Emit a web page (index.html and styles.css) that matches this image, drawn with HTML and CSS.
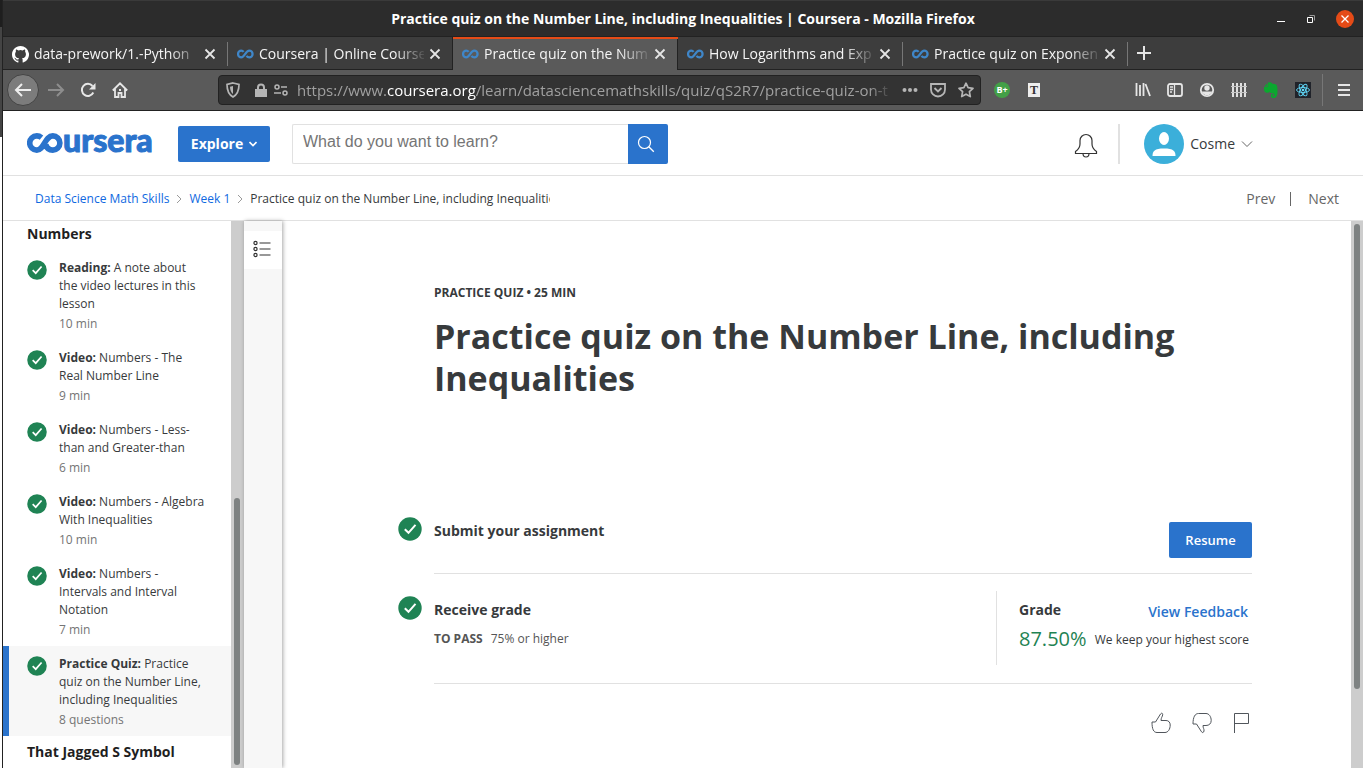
FILE: index.html
```html
<!DOCTYPE html>
<html lang="en">
<head>
<meta charset="utf-8">
<title>Practice quiz on the Number Line, including Inequalities | Coursera</title>
<link rel="stylesheet" href="styles.css">
</head>
<body>
<svg class="defs" width="0" height="0" aria-hidden="true">
  <symbol id="check" viewBox="0 0 24 24"><circle cx="12" cy="12" r="11.7" fill="#1f8354"/><path d="M6.800 12.200l3.700 3.600 7-8" fill="none" stroke="#fff" stroke-width="2"/></symbol>
  <symbol id="infinity" viewBox="0 0 18 10"><path d="M7 2.800C6.400 2 5.600 1.500 4.600 1.500a3.500 3.500 0 0 0 0 7C8.200 8.500 9 1.500 13 1.500a3.500 3.500 0 0 1 0 7c-1.400 0-2.300-.6-3-1.500" fill="none" stroke="#3f86c8" stroke-width="2.400"/></symbol>
  <symbol id="close" viewBox="0 0 12 12"><path d="M1.500 1.500l9 9M10.500 1.500l-9 9" fill="none" stroke="#e6e6e6" stroke-width="1.800"/></symbol>
  <symbol id="crumb" viewBox="0 0 6 10"><path d="M1 1l4 4-4 4" fill="none" stroke="#9a9a9a"/></symbol>
</svg>
<div class="window">
  <header class="titlebar">
    <span class="win-title">Practice quiz on the Number Line, including Inequalities | Coursera - Mozilla Firefox</span>
    <div class="win-controls">
      <button aria-label="Minimize"><svg width="10" height="18"><path d="M1 11.500h8" stroke="#fff"/></svg></button>
      <button aria-label="Restore"><svg width="10" height="18"><path d="M3.500 5.500h5v5" fill="none" stroke="#999"/><path d="M1.500 7.500h5v5h-5z" fill="none" stroke="#fff"/></svg></button>
      <button aria-label="Close"><svg width="18" height="18"><circle cx="9" cy="9" r="9" fill="#e54b17"/><path d="M5.500 5.500l7 7M12.500 5.500l-7 7" stroke="#fff" stroke-width="1.300"/></svg></button>
    </div>
  </header>

  <nav class="tabs" aria-label="Tabs">
    <div class="tab"><svg width="17" height="17" viewBox="0 0 16 16"><path fill="#fff" d="M8 0C3.580 0 0 3.580 0 8c0 3.540 2.290 6.530 5.470 7.590.4.07.55-.17.55-.38v-1.490c-2.230.48-2.700-.95-2.700-.95-.36-.92-.89-1.170-.89-1.170-.73-.5.05-.49.05-.49.8.06 1.230.83 1.230.83.72 1.220 1.880.87 2.330.66.07-.52.28-.87.51-1.070-1.780-.2-3.640-.89-3.640-3.950 0-.87.31-1.590.82-2.150-.08-.2-.36-1.020.08-2.120 0 0 .67-.21 2.200.82a7.600 7.600 0 0 1 4 0c1.530-1.040 2.200-.82 2.200-.82.44 1.100.16 1.920.08 2.120.51.56.82 1.270.82 2.150 0 3.070-1.870 3.750-3.650 3.950.29.25.54.73.54 1.480v2.200c0 .21.15.46.55.38A8 8 0 0 0 8 0z"/></svg><a href="#">data-prework/1.-Python</a><button aria-label="Close tab"><svg width="12" height="12"><use href="#close"/></svg></button></div>
    <div class="tab before-active"><svg width="17" height="10"><use href="#infinity"/></svg><a href="#">Coursera | Online Course</a><button aria-label="Close tab"><svg width="12" height="12"><use href="#close"/></svg></button></div>
    <div class="tab active"><svg width="17" height="10"><use href="#infinity"/></svg><a href="#">Practice quiz on the Num</a><button aria-label="Close tab"><svg width="12" height="12"><use href="#close"/></svg></button></div>
    <div class="tab"><svg width="17" height="10"><use href="#infinity"/></svg><a href="#">How Logarithms and Exp</a><button aria-label="Close tab"><svg width="12" height="12"><use href="#close"/></svg></button></div>
    <div class="tab"><svg width="17" height="10"><use href="#infinity"/></svg><a href="#">Practice quiz on Exponen</a><button aria-label="Close tab"><svg width="12" height="12"><use href="#close"/></svg></button></div>
    <button class="new-tab" aria-label="New tab"><svg width="16" height="16"><path d="M8 1v14M1 8h14" stroke="#e6e6e6" stroke-width="2"/></svg></button>
  </nav>

  <div class="toolbar">
    <button class="tool back" aria-label="Back"><svg width="18" height="16"><path d="M17 8H2M8 2L2 8l6 6" fill="none" stroke="#eee" stroke-width="2"/></svg></button>
    <button class="tool" aria-label="Forward"><svg width="18" height="16"><path d="M1 8h15M10 2l6 6-6 6" fill="none" stroke="#8d8d8d" stroke-width="2"/></svg></button>
    <button class="tool" aria-label="Reload"><svg width="16" height="16"><path d="M13.300 10.500A6 6 0 1 1 12.500 4" fill="none" stroke="#e6e6e6" stroke-width="2"/><path d="M15.500 1v6.500H9z" fill="#e6e6e6"/></svg></button>
    <button class="tool" aria-label="Home"><svg width="16" height="16"><path d="M.8 8.500L8 1.300l7.200 7.200M3 7v8h3.500v-4h3v4H13V7" fill="none" stroke="#e6e6e6" stroke-width="1.800"/><path d="M7 7h2v2H7z" fill="#e6e6e6"/></svg></button>
    <div class="urlbar">
      <svg width="14" height="16"><path d="M7 1L13 2.500C13 9 11.500 12.500 7 15 2.500 12.500 1 9 1 2.500z" fill="none" stroke="#b5b5b5" stroke-width="1.700"/><path d="M7 4v8C5 10.500 4 8 4 4.700z" fill="#b5b5b5"/></svg>
      <svg class="lock" width="12" height="15"><path d="M0 6h12v8H0z" fill="#b5b5b5"/><path d="M3 7V4.500a3 3 0 0 1 6 0V7" fill="none" stroke="#b5b5b5" stroke-width="2"/></svg>
      <svg width="14" height="12"><g fill="none" stroke="#b5b5b5" stroke-width="1.500"><circle cx="3" cy="3" r="2"/><path d="M7 3h6M0 9h7"/><circle cx="11" cy="9" r="2"/></g></svg>
      <span class="url">https://www.<b>coursera.org</b>/learn/datasciencemathskills/quiz/qS2R7/practice-quiz-on-t</span>
      <svg width="16" height="16" fill="#b5b5b5"><circle cx="2.500" cy="8" r="2"/><circle cx="8" cy="8" r="2"/><circle cx="13.500" cy="8" r="2"/></svg>
      <svg width="16" height="16"><path d="M1 2h14v5.500a7 7 0 0 1-14 0zM4.500 6L8 9.500 11.500 6" fill="none" stroke="#b5b5b5" stroke-width="1.800"/></svg>
      <svg width="16" height="16"><path d="M8 1.200l2.100 4.500 4.900.6-3.600 3.400.9 4.900L8 12.200l-4.300 2.400.9-4.900L1 6.300l4.900-.6z" fill="none" stroke="#b5b5b5" stroke-width="1.700" stroke-linejoin="round"/></svg>
    </div>
    <button class="tool badge-b" aria-label="Extension B plus"><span>B+</span></button>
    <button class="tool badge-t" aria-label="Extension T"><span>T</span></button>
    <div class="tools-end">
      <button class="tool" aria-label="Library"><svg width="16" height="16"><path d="M1.500 1v13M5 3v11M8.500 1v13M10.500 2l4.500 12" stroke="#e6e6e6" stroke-width="1.800"/></svg></button>
      <button class="tool" aria-label="Sidebars"><svg width="16" height="14"><rect x="1" y="1" width="14" height="12" rx="2" fill="none" stroke="#e6e6e6" stroke-width="1.800"/><path d="M7.500 1v12M3 4h3M3 6.500h3M3 9h2" stroke="#e6e6e6" stroke-width="1.300"/></svg></button>
      <button class="tool" aria-label="Account"><svg width="16" height="16"><circle cx="8" cy="8" r="6.200" fill="none" stroke="#e6e6e6" stroke-width="1.800"/><circle cx="8" cy="6" r="2.700" fill="#e6e6e6"/><path d="M2.500 9.500h11A6 6 0 0 1 2.500 9.500z" fill="#e6e6e6"/></svg></button>
      <button class="tool" aria-label="Containers"><svg width="16" height="16"><path d="M2 1v14M6 1v14M10 1v14M14 1v14" stroke="#e0e0e0" stroke-width="2"/><path d="M0 4.500h16M0 10.500h16" stroke="#c4c4c4"/></svg></button>
      <button class="tool" aria-label="Evernote"><svg width="16" height="16"><path d="M4.800.8L1 4.700v2c0 2 .8 3.800 2.500 4 1.600.2 2.800-.4 3-1.300.2 1.300 1.200 1.600 2.900 1.800 1.500.1 2 .7 2 1.800s-.5 1.300-1.400 1.300c-.8 0-.8-1.200.2-1.200v-1.400c-1.700 0-2.400.9-2.400 2.100 0 1.500.8 2.200 2.700 2.200 3.200 0 4-2.900 4-6.800 0-3-.1-6-1.400-6.700-.8-.4-2.500-.6-3.800-.7C8.800 0 5.400-.2 4.800.8z" fill="#0ba82f"/><path d="M4.500 1v3.500H1" fill="none" stroke="#5a5a5a" stroke-width=".6"/></svg></button>
      <button class="tool" aria-label="React tools"><svg width="16" height="16" viewBox="0 0 16 16"><path d="M0 0h16v16H0z" fill="#20232a"/><g fill="none" stroke="#61dafb" stroke-width=".9"><ellipse cx="8" cy="8" rx="6.500" ry="2.500"/><ellipse cx="8" cy="8" rx="6.500" ry="2.500" transform="rotate(60 8 8)"/><ellipse cx="8" cy="8" rx="6.500" ry="2.500" transform="rotate(120 8 8)"/></g><circle cx="8" cy="8" r="1.300" fill="#61dafb"/></svg></button>
    </div>
    <button class="tool menu" aria-label="Open menu"><svg width="14" height="14"><path d="M1 2h12M1 7h12M1 12h12" stroke="#e6e6e6" stroke-width="2"/></svg></button>
  </div>

  <div class="site-header">
    <a class="logo" href="#" aria-label="Coursera"><svg width="36" height="20" viewBox="0 0 36 20"><path d="M14.500 4.600C13 3.400 11.500 2.900 9.800 2.900a7 7 0 0 0 0 14.200c7.200 0 8.200-14.200 16-14.200a7.100 7.100 0 0 1 0 14.200c-3.800 0-6.200-2.400-7-5.600" fill="none" stroke="#2a73cc" stroke-width="5.600"/></svg><span>ursera</span></a>
    <button class="explore">Explore <svg width="8" height="6"><path d="M.5 1L4 4.500 7.500 1" fill="none" stroke="#fff" stroke-width="1.600"/></svg></button>
    <form class="search">
      <input type="text" aria-label="Search" placeholder="What do you want to learn?">
      <button type="button" aria-label="Search"><svg width="18" height="18"><circle cx="7.500" cy="7.500" r="6" fill="none" stroke="#fff" stroke-width="1.200"/><path d="M11.800 11.800l5 5" stroke="#fff" stroke-width="1.300"/></svg></button>
    </form>
    <button class="bell" aria-label="Notifications"><svg width="24" height="26"><path d="M1.500 20.500v-2c3-2 4.500-4 4.500-7.500V7.500a6 6 0 0 1 12 0V11c0 3.500 1.500 5.500 4.500 7.500v2zM9 20.500a3 3.500 0 0 0 6 0" fill="none" stroke="#333" stroke-width="1.200"/></svg></button>
    <button class="account"><svg width="40" height="40"><circle cx="20" cy="20" r="20" fill="#3bafda"/><ellipse cx="20" cy="14.500" rx="5" ry="6.500" fill="#fff"/><path d="M8.500 32c0-5 2-7.500 11.500-7.500S31.500 27 31.500 32z" fill="#fff"/></svg><span>Cosme</span><svg width="12" height="8"><path d="M1 1.500l5 5 5-5" fill="none" stroke="#666"/></svg></button>
  </div>

  <div class="subheader">
    <nav class="crumbs" aria-label="Breadcrumb">
      <a href="#">Data Science Math Skills</a><svg width="6" height="10"><use href="#crumb"/></svg><a href="#">Week 1</a><svg width="6" height="10"><use href="#crumb"/></svg><span>Practice quiz on the Number Line, including Inequalities</span>
    </nav>
    <nav class="pager" aria-label="Items"><a href="#">Prev</a><a href="#">Next</a></nav>
  </div>

  <div class="body">
    <aside class="lessons">
      <h2>Numbers</h2>
      <a class="item" href="#"><svg width="20" height="20"><use href="#check"/></svg><span class="name"><b>Reading:</b> A note about the video lectures in this lesson<small>10 min</small></span></a>
      <a class="item" href="#"><svg width="20" height="20"><use href="#check"/></svg><span class="name"><b>Video:</b> Numbers - The Real Number Line<small>9 min</small></span></a>
      <a class="item" href="#"><svg width="20" height="20"><use href="#check"/></svg><span class="name"><b>Video:</b> Numbers - Less-than and Greater-than<small>6 min</small></span></a>
      <a class="item" href="#"><svg width="20" height="20"><use href="#check"/></svg><span class="name"><b>Video:</b> Numbers - Algebra With Inequalities<small>10 min</small></span></a>
      <a class="item" href="#"><svg width="20" height="20"><use href="#check"/></svg><span class="name"><b>Video:</b> Numbers - Intervals and Interval Notation<small>7 min</small></span></a>
      <a class="item current" href="#"><svg width="20" height="20"><use href="#check"/></svg><span class="name"><b>Practice Quiz:</b> Practice quiz on the Number Line, including Inequalities<small>8 questions</small></span></a>
      <h2>That Jagged S Symbol</h2>
    </aside>
    <div class="scroll side-scroll"><i></i></div>
    <div class="rail"><button aria-label="Toggle lesson list"><svg width="18" height="18"><g fill="none" stroke="#333" stroke-width="1.200"><circle cx="2.500" cy="3" r="1.600"/><circle cx="2.500" cy="9" r="1.600"/><circle cx="2.500" cy="15" r="1.600"/><path d="M6.500 3h11M6.500 9h11M6.500 15h11"/></g></svg></button></div>
    <main class="content">
      <p class="kind">PRACTICE QUIZ • 25 MIN</p>
      <h1>Practice quiz on the Number Line, including Inequalities</h1>
      <section class="step submit">
        <svg width="24" height="24"><use href="#check"/></svg>
        <div class="step-body"><h3>Submit your assignment</h3><button class="resume">Resume</button></div>
      </section>
      <section class="step receive">
        <svg width="24" height="24"><use href="#check"/></svg>
        <div class="step-body">
          <div class="pass"><h3>Receive grade</h3><p><b>TO PASS</b>75% or higher</p></div>
          <div class="grade">
            <div class="grade-head"><h3>Grade</h3><a href="#">View Feedback</a></div>
            <div class="score"><strong>87.50%</strong><span>We keep your highest score</span></div>
          </div>
        </div>
      </section>
      <div class="feedback">
        <button aria-label="Like"><svg width="20" height="22"><path d="M1 10h3.500L9.500 2c1-1.500 2.500-.8 2.200.8-.2 1.700-1.700 3-1.700 5.700h5c2.600 0 4.200 1.800 4.200 4.500 0 4.300-2.200 7.500-5.200 7.500H6C2.500 20.500 1 17 1 10z" fill="none" stroke="#51565c"/></svg></button>
        <button aria-label="Dislike"><svg width="20" height="22"><path d="M1 12c0-7 2-10.500 5.500-10.500H14c3 0 5.200 3.200 5.200 7 0 3-2 5-5.200 5h-3c0 2.700 1.300 3.500 1 5.500-.3 1.800-1.800 2-2.500.8L4.500 12z" fill="none" stroke="#51565c"/></svg></button>
        <button aria-label="Report"><svg width="18" height="22"><path d="M1.500 21V1.500h14v10h-14" fill="none" stroke="#51565c"/></svg></button>
      </div>
    </main>
    <div class="scroll main-scroll"><i></i></div>
  </div>
</div>
</body>
</html>
```

FILE: styles.css
```css
* { box-sizing: border-box; }
body {
  margin: 0;
  padding-left: 2px;
  background: linear-gradient(#1e1e1e 27px, #444 27px 137px, #fff 137px);
  color: #373a3c;
  font: 12px/18px "Open Sans", "Noto Sans", sans-serif;
}
.defs { position: absolute; }
h1, h2, h3, p { margin: 0; }
a { color: inherit; text-decoration: none; }
svg { display: block; flex: none; }
button { display: flex; align-items: center; justify-content: center; padding: 0; border: 0; background: none; font: inherit; color: inherit; }

.window { display: flex; flex-direction: column; height: 100vh; border-left: 1px solid #222; background: #fff; overflow: hidden; }

/* Browser frame */
.titlebar { display: grid; grid-template-columns: 1fr auto 1fr; align-items: center; flex: none; height: 37px; border-top: 1px solid #3a3a3a; border-bottom: 1px solid #222; background: #2c2c2c; color: #fff; }
.win-title { grid-column: 2; font-size: 14px; font-weight: 700; }
.win-controls { display: flex; justify-content: flex-end; gap: 20px; padding-right: 9px; }
.tabs { display: flex; flex: none; height: 33px; border-bottom: 1px solid #222; background: #3d3d3d; color: #f5f5f5; font-size: 14px; }
.tab { position: relative; display: flex; align-items: center; flex: 0 1 225px; gap: 5px; min-width: 0; padding: 2px 12px 0 9px; }
.tab::after { content: ""; position: absolute; right: 0; top: 5px; bottom: 3px; width: 1px; background: #777; }
.tab a { flex: 1; min-width: 0; overflow: hidden; white-space: nowrap; mask-image: linear-gradient(to right, #000 82%, transparent 102%); }
.tab.active { margin-bottom: -1px; padding-top: 0; border-top: 2px solid #e54b17; background: #5a5a5a; padding-bottom: 1px; }
.tab.active::after, .tab.before-active::after { top: 0; bottom: 0; background: #222; }
.new-tab { width: 32px; }
.toolbar { display: flex; align-items: center; flex: none; height: 41px; padding: 0 4px; border-bottom: 1px solid #222; background: #5a5a5a; }
.tool { flex: none; width: 32px; height: 32px; }
.back { margin-right: 1px; border: 1px solid #444; border-radius: 50%; background: #7c7c7c; }
.urlbar { display: flex; align-items: center; flex: 1; gap: 12px; min-width: 0; height: 30px; margin: 0 5px 0 82px; padding: 0 6px 0 7px; border: 1px solid #222; border-radius: 4px; background: #333; color: #a0a0a0; font-size: 15px; }
.lock { box-sizing: content-box; padding-left: 3px; margin-right: -5px; }
.url { flex: 1; min-width: 0; overflow: hidden; margin: 0 -3px; line-height: 22px; white-space: nowrap; mask-image: linear-gradient(to right, #000 96%, transparent); }
.url b { color: #fff; font-weight: 400; }
.badge-b span { width: 16px; height: 16px; border-radius: 50%; background: #43a047; color: #fff; font-size: 9px; font-weight: 700; line-height: 16px; }
.badge-t span { width: 12px; height: 14px; background: #eee; color: #333; font: 700 12px/14px "Liberation Serif", serif; }
.tools-end { display: flex; margin-left: 77px; }
.menu { margin-left: 3px; padding-left: 6px; width: 37px; border-left: 1px solid #777; }

/* Site header */
.site-header { display: flex; align-items: center; flex: none; height: 65px; padding: 1px 110px 0 24px; border-bottom: 1px solid #e1e1e1; }
.logo { display: flex; align-items: center; height: 20px; margin-right: 24px; color: #2a73cc; font: 900 32px/20px Lato, sans-serif; -webkit-text-stroke: 1px #2a73cc; }
.logo svg { margin-top: -2px; }
.logo span { margin-top: -8px; width: 91px; white-space: nowrap; }
.explore { gap: 6px; width: 92px; height: 36px; border-radius: 2px; background: #2a73cc; color: #fff; font-size: 14px; font-weight: 700; }
.search { display: flex; flex: 0 1 376px; margin: 0 auto 0 22px; height: 40px; }
.search input { flex: 1; min-width: 0; padding: 0 10px 3px; border: 1px solid #e1e1e1; border-right: 0; border-radius: 2px 0 0 2px; font: 16px "Liberation Sans", Arial, sans-serif; }
.search input::placeholder { color: #757575; }
.search button { width: 40px; padding-right: 4px; border-radius: 0 2px 2px 0; background: #2a73cc; }
.bell { height: 40px; padding: 4px 20px 0 0; border-right: 2px solid #e1e1e1; }
.account { gap: 6px; margin-left: 24px; font-size: 14px; }

.subheader { display: flex; align-items: center; justify-content: space-between; flex: none; height: 45px; padding: 1px 24px 0 32px; border-bottom: 1px solid #e1e1e1; }
.crumbs { display: flex; align-items: center; gap: 7px; }
.crumbs a { color: #0f69e1; }
.crumbs span { max-width: 300px; overflow: hidden; white-space: nowrap; }
.pager { display: flex; color: #666; font-size: 14px; line-height: 14px; }
.pager a + a { margin-left: 15px; padding-left: 17px; border-left: 1px solid #666; }

/* Lesson list */
.body { display: flex; flex: 1; min-height: 0; }
.lessons { display: flex; flex-direction: column; justify-content: flex-end; flex: 0 0 228px; overflow: hidden; }
.lessons h2 { flex: none; height: 32px; padding: 6px 24px; color: #1f1f1f; font-size: 14px; line-height: 20px; }
.item { display: flex; flex: none; align-items: flex-start; gap: 12px; padding: 9px 24px 7px; }
.item svg { margin-top: 1px; }
.item small { display: block; margin-top: 2px; color: #757575; font-size: 12px; }
.current { border-left: 6px solid #2a73cc; padding-left: 18px; background: #f7f7f7; }
.scroll { display: flex; flex: none; background: #cdcdcd; }
.scroll i { width: 6px; border-radius: 3px; background: #7e8282; }
.side-scroll { width: 13px; padding: 0 3px 3px; align-items: flex-end; }
.side-scroll i { height: 49%; }
.main-scroll { width: 12px; padding: 3px; }
.main-scroll i { height: 86%; }
.rail { z-index: 1; flex: 0 0 38px; padding-top: 10px; background: #f7f7f7; box-shadow: 1px 0 4px rgba(0, 0, 0, .35); }
.rail button { width: 38px; height: 38px; padding: 0 3px 3px 0; background: #fff; }

/* Quiz */
.content { flex: 1; min-width: 0; padding: 63px 99px 0 116px; overflow: hidden; }
.kind { padding-left: 36px; font-weight: 700; }
h1 { margin: 13px 0 118px; padding-left: 36px; font-size: 34px; line-height: 42px; }
h3 { font-size: 14px; line-height: 20px; }
.step { display: flex; gap: 12px; }
.step-body { display: flex; justify-content: space-between; flex: 1; border-bottom: 1px solid #e1e1e1; }
.submit .step-body { height: 57px; padding-top: 4px; }
.resume { width: 83px; height: 36px; margin-top: 1px; border-radius: 2px; background: #2a73cc; color: #fff; font-size: 13px; font-weight: 600; }
.receive { padding-top: 17px; }
.receive > svg { margin-top: 5px; }
.receive .step-body { height: 93px; padding-bottom: 18px; }
.pass { padding-top: 9px; }
.pass p { margin-top: 10px; color: #555; }
.pass b { margin-right: 8px; }
.grade { width: 256px; padding: 9px 3px 0 22px; border-left: 1px solid #e1e1e1; }
.grade-head { display: flex; justify-content: space-between; padding-right: 1px; }
.grade-head a { padding-top: 3px; color: #2a73cc; font-size: 14px; font-weight: 600; }
.score { display: flex; align-items: center; justify-content: space-between; margin-top: 6px; white-space: nowrap; }
.score strong { color: #1f8354; font-size: 20px; font-weight: 400; line-height: 24px; }
.score span { padding-top: 2px; }
.feedback { display: flex; justify-content: flex-end; gap: 21px; margin: 28px 1px 0 0; }
```
